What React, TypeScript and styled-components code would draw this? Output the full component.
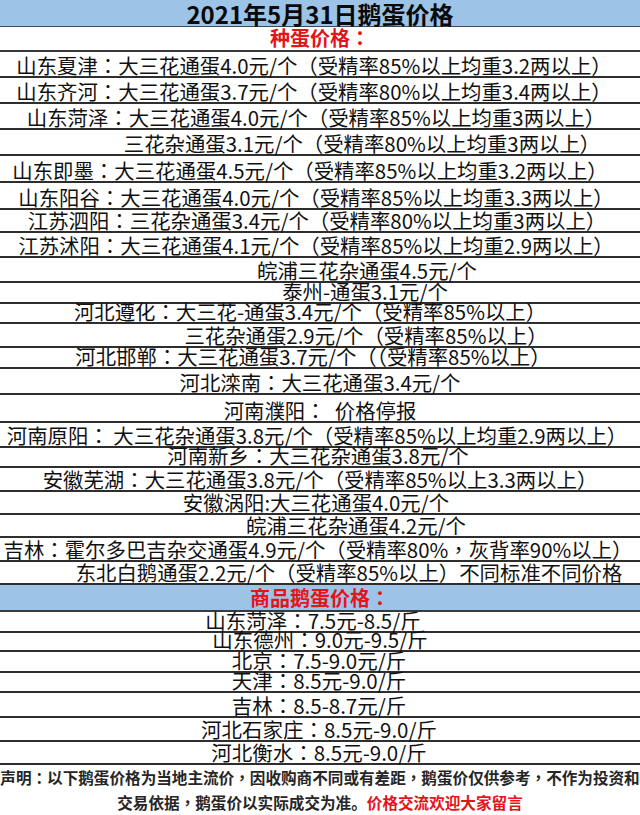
import React from "react";
import styled, { createGlobalStyle } from "styled-components";

const GlobalStyle = createGlobalStyle`
  html, body { margin: 0; padding: 0; background: #ffffff; }
  body { font-family: "Noto Sans CJK SC", "Noto Sans", sans-serif; color: #111; }
`;

const Sheet = styled.div`
  width: 640px;
  display: flex;
  flex-direction: column;
  overflow: hidden;
`;

const TitleBar = styled.div`
  height: 27px;
  box-sizing: border-box;
  background: #9dc3e6;
  border-bottom: 1px solid #3c4a58;
  display: flex;
  justify-content: center;
  align-items: center;
  font-size: 24px;
  font-weight: 700;
  line-height: 27px;
  color: #0a0a0a;
`;

const SectionHead = styled.div<{ $h: number; $blue?: boolean }>`
  height: ${(p) => p.$h}px;
  box-sizing: border-box;
  background: ${(p) => (p.$blue ? "#9dc3e6" : "#ffffff")};
  border-bottom: 2px solid #3a3a3a;
  display: flex;
  justify-content: center;
  align-items: flex-end;
  font-size: 20px;
  font-weight: 700;
  line-height: 1;
  color: #e3141c;
  padding-bottom: 2px;
`;

const Row = styled.div<{ $h: number; $big?: boolean }>`
  height: ${(p) => p.$h}px;
  box-sizing: border-box;
  border-bottom: 2px solid #2e2e2e;
  display: flex;
  justify-content: center;
  align-items: flex-end;
  font-size: ${(p) => (p.$big ? 20.5 : 20.4)}px;
  line-height: 1;
  white-space: pre;
  color: #111;
  padding-bottom: 1px;
`;

const Punct = styled.span`
  display: inline-block;
  width: 1em;
  text-align: center;
  font-family: "Noto Sans CJK TC", "Noto Sans CJK SC", sans-serif;
`;

const Footer = styled.div`
  height: 50px;
  display: flex;
  flex-direction: column;
  align-items: center;
  justify-content: center;
  font-size: 15.6px;
  font-weight: 700;
  line-height: 25px;
  color: #262626;
  white-space: pre;
`;

const Red = styled.span`
  color: #e3141c;
`;

const PUNCT = /([：，])/;

function Txt({ s }: { s: string }) {
  return (
    <>
      {s.split(PUNCT).map((seg, i) =>
        seg === "：" || seg === "，" ? (
          <Punct key={i}>{seg}</Punct>
        ) : (
          <React.Fragment key={i}>{seg}</React.Fragment>
        )
      )}
    </>
  );
}

type Item = { t: string; h: number; c: number };

const seedRows: Item[] = [
  { t: "山东夏津：大三花通蛋4.0元/个（受精率85%以上均重3.2两以上）", h: 26, c: 314 },
  { t: "山东齐河：大三花通蛋3.7元/个（受精率80%以上均重3.4两以上）", h: 26, c: 314 },
  { t: "山东菏泽：大三花通蛋4.0元/个（受精率85%以上均重3两以上）", h: 26, c: 316 },
  { t: "三花杂通蛋3.1元/个（受精率80%以上均重3两以上）", h: 26, c: 362 },
  { t: "山东即墨：大三花通蛋4.5元/个（受精率85%以上均重3.2两以上）", h: 27, c: 310 },
  { t: "山东阳谷：大三花通蛋4.0元/个（受精率85%以上均重3.3两以上）", h: 27, c: 316 },
  { t: "江苏泗阳：三花杂通蛋3.4元/个（受精率80%以上均重3两以上）", h: 23, c: 317 },
  { t: "江苏沭阳：大三花通蛋4.1元/个（受精率85%以上均重2.9两以上）", h: 25, c: 316 },
  { t: "皖浦三花杂通蛋4.5元/个", h: 25, c: 367 },
  { t: "泰州-通蛋3.1元/个", h: 21, c: 365 },
  { t: "河北遵化：大三花-通蛋3.4元/个（受精率85%以上）", h: 20, c: 310 },
  { t: "三花杂通蛋2.9元/个（受精率85%以上）", h: 24, c: 366 },
  { t: "河北邯郸：大三花通蛋3.7元/个（（受精率85%以上）", h: 21, c: 313 },
  { t: "河北滦南：大三花通蛋3.4元/个", h: 26, c: 320 },
  { t: "河南濮阳：  价格停报", h: 28, c: 320 },
  { t: "河南原阳： 大三花杂通蛋3.8元/个（受精率85%以上均重2.9两以上）", h: 25, c: 317 },
  { t: "河南新乡：大三花杂通蛋3.8元/个", h: 20, c: 318 },
  { t: "安徽芜湖：大三花通蛋3.8元/个（受精率85%以上3.3两以上）", h: 24, c: 320 },
  { t: "安徽涡阳:大三花通蛋4.0元/个", h: 23, c: 316 },
  { t: "皖浦三花杂通蛋4.2元/个", h: 23, c: 356 },
  { t: "吉林：霍尔多巴吉杂交通蛋4.9元/个（受精率80%，灰背率90%以上）", h: 24, c: 318 },
  { t: "东北白鹅通蛋2.2元/个（受精率85%以上）不同标准不同价格", h: 23, c: 349 },
];

const goodsRows: Item[] = [
  { t: "山东菏泽：7.5元-8.5/斤", h: 21, c: 313 },
  { t: "山东德州：9.0元-9.5/斤", h: 19, c: 320 },
  { t: "北京：7.5-9.0元/斤", h: 21, c: 319 },
  { t: "天津：8.5元-9.0/斤", h: 20, c: 319 },
  { t: "吉林：8.5-8.7元/斤", h: 25, c: 319 },
  { t: "河北石家庄：8.5元-9.0/斤", h: 24, c: 319 },
  { t: "河北衡水：8.5元-9.0/斤", h: 23, c: 319 },
];

const shiftStyle = (c: number): React.CSSProperties =>
  c >= 320 ? { paddingLeft: (c - 320) * 2 } : { paddingRight: (320 - c) * 2 };

export default function App() {
  return (
    <>
      <GlobalStyle />
      <Sheet>
        <TitleBar>2021年5月31日鹅蛋价格</TitleBar>
        <SectionHead $h={25}>
          <Txt s="种蛋价格：" />
        </SectionHead>
        {seedRows.map((r, i) => (
          <Row key={"s" + i} $h={r.h} style={shiftStyle(r.c)}>
            <Txt s={r.t} />
          </Row>
        ))}
        <SectionHead $h={27} $blue>
          <Txt s="商品鹅蛋价格：" />
        </SectionHead>
        {goodsRows.map((r, i) => (
          <Row key={"g" + i} $h={r.h} $big style={shiftStyle(r.c)}>
            <Txt s={r.t} />
          </Row>
        ))}
        <Footer>
          <div>
            <Txt s="声明：以下鹅蛋价格为当地主流价，因收购商不同或有差距，鹅蛋价仅供参考，不作为投资和" />
          </div>
          <div>
            <Txt s="交易依据，鹅蛋价以实际成交为准。" />
            <Red>价格交流欢迎大家留言</Red>
          </div>
        </Footer>
      </Sheet>
    </>
  );
}
